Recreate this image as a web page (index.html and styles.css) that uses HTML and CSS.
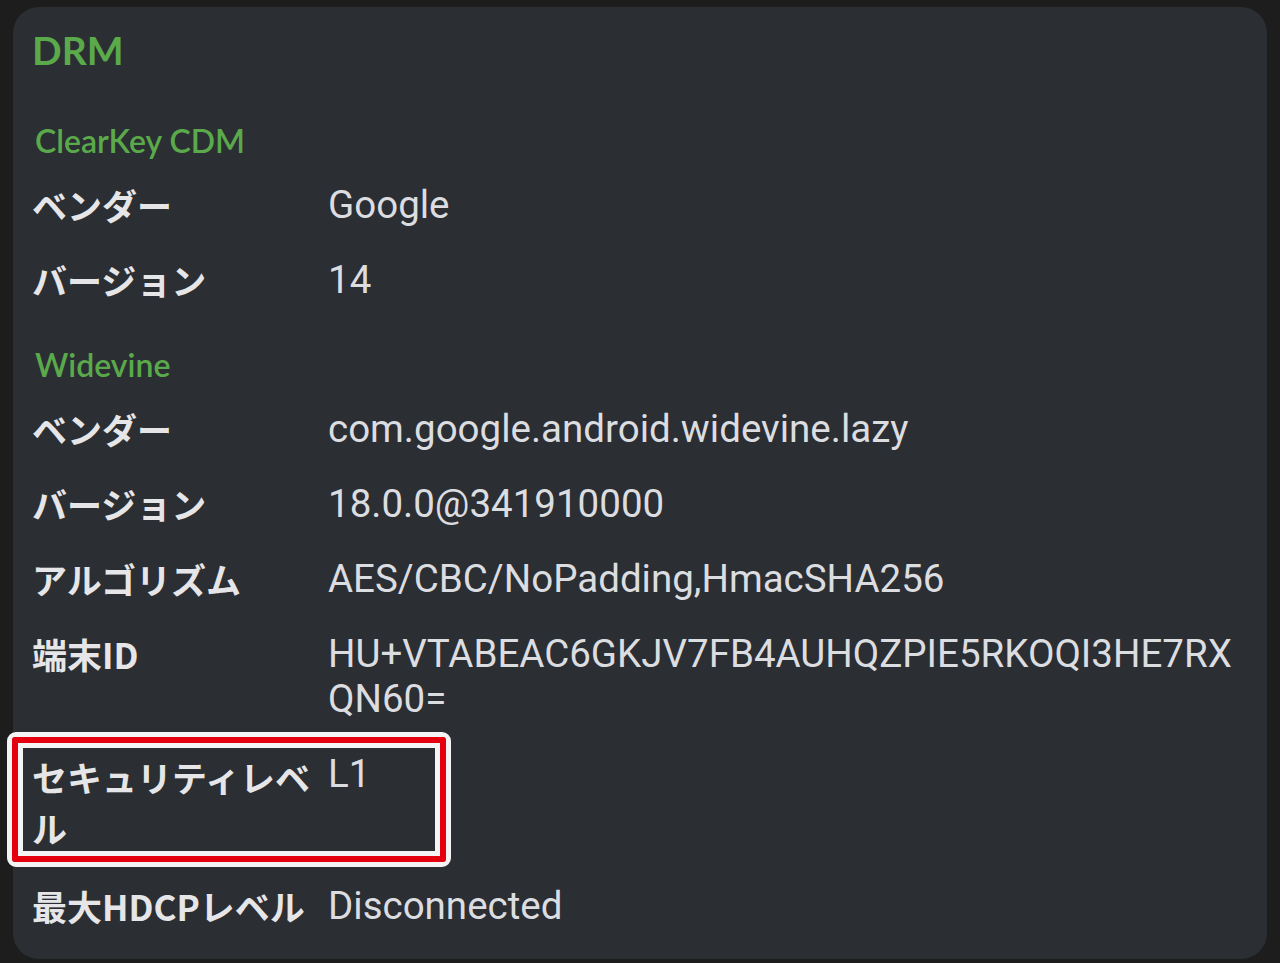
FILE: index.html
```html
<!DOCTYPE html>
<html lang="ja">
<head>
<meta charset="utf-8">
<title>DRM</title>
<link rel="stylesheet" href="styles.css">
</head>
<body>
<main class="card">
  <h1 class="title">DRM</h1>

  <h2 class="section">ClearKey CDM</h2>
  <div class="row"><div class="label">ベンダー</div><div class="value">Google</div></div>
  <div class="row"><div class="label">バージョン</div><div class="value">14</div></div>

  <h2 class="section section-second">Widevine</h2>
  <div class="row"><div class="label">ベンダー</div><div class="value">com.google.android.widevine.lazy</div></div>
  <div class="row"><div class="label">バージョン</div><div class="value">18.0.0@341910000</div></div>
  <div class="row"><div class="label">アルゴリズム</div><div class="value">AES/CBC/NoPadding,HmacSHA256</div></div>
  <div class="row"><div class="label">端末ID</div><div class="value value-break">HU+VTABEAC6GKJV7FB4AUHQZPIE5RKOQI3HE7RXQN60=</div></div>
  <div class="row row-highlight">
    <div class="label label-wrap">セキュリティレベル</div><div class="value">L1</div>
    <span class="highlight" aria-hidden="true"></span>
  </div>
  <div class="row"><div class="label">最大HDCPレベル</div><div class="value">Disconnected</div></div>
</main>
</body>
</html>
```

FILE: styles.css
```css
html, body {
  margin: 0;
  padding: 0;
}

body {
  background: #1c1d1c;
  width: 1280px;
  height: 963px;
  overflow: hidden;
}

.card {
  margin: 7px 13px 0 13px;
  height: 952px;
  box-sizing: border-box;
  background: #2b2e32;
  border-radius: 26px;
  padding: 21px 20px 0 19px;
}

.title {
  margin: 0;
  font-family: Lato, "Noto Sans", sans-serif;
  font-weight: 700;
  font-size: 39px;
  line-height: 45px;
  color: #5aa94b;
}

.section {
  margin: 45px 0 4px 3px;
  font-family: Lato, "Noto Sans", sans-serif;
  font-weight: 600;
  font-size: 32px;
  line-height: 45px;
  color: #5aa94b;
}

.section-second {
  margin-top: 25px;
}

.row {
  display: flex;
  padding: 15px 0;
  position: relative;
}

.label {
  flex: 0 0 296px;
  width: 296px;
  font-family: "Noto Sans CJK JP", "Noto Sans", sans-serif;
  font-weight: 700;
  font-size: 35px;
  line-height: 45px;
  color: #e6e6e8;
}

.label-wrap {
  line-height: 51px;
}

.value {
  flex: 1 1 auto;
  min-width: 0;
  font-family: Roboto, "Liberation Sans", sans-serif;
  font-size: 38.5px;
  line-height: 45px;
  color: #dcdde0;
}

.value-break {
  word-break: break-all;
}

.highlight {
  position: absolute;
  left: -25px;
  top: -4px;
  width: 444px;
  height: 135px;
  box-sizing: border-box;
  border: 5px solid #f4f4f4;
  border-radius: 9px;
  pointer-events: none;
}

.highlight::before {
  content: "";
  position: absolute;
  inset: 0;
  border: 6px solid #e4000f;
  border-radius: 3px;
}

.highlight::after {
  content: "";
  position: absolute;
  inset: 6px;
  border: 5px solid #f4f4f4;
}
```
